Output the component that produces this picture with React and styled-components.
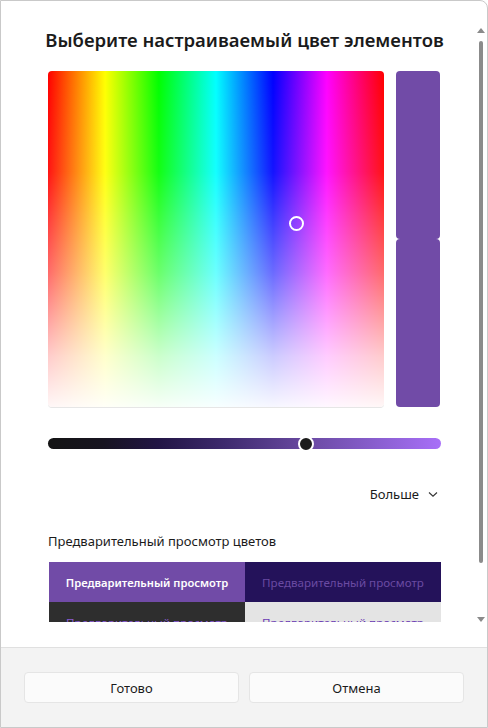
import React from 'react';
import styled, { createGlobalStyle } from 'styled-components';

const GlobalStyle = createGlobalStyle`
  html, body {
    margin: 0;
    padding: 0;
    background: #ffffff;
  }
  * {
    box-sizing: border-box;
  }
`;

const Dialog = styled.div`
  width: 488px;
  height: 728px;
  display: flex;
  flex-direction: column;
  border: 1px solid #c9c9c9;
  border-top-right-radius: 8px;
  overflow: hidden;
  background: #ffffff;
  font-family: "Noto Sans", "Open Sans", sans-serif;
  color: #1b1b1b;
`;

const Body = styled.div`
  flex: 1;
  padding-top: 23px;
`;

const Viewport = styled.div`
  position: relative;
  height: 598px;
  overflow: hidden;
`;

const Content = styled.div`
  padding: 0 46px 0 47px;
  display: flex;
  flex-direction: column;
`;

const Title = styled.h1`
  margin: 3px -12px 0;
  font-size: 18.5px;
  line-height: 26px;
  font-weight: 600;
  text-align: center;
  white-space: nowrap;
`;

const PickerRow = styled.div`
  margin-top: 18px;
  display: flex;
  gap: 12px;
`;

const Spectrum = styled.div`
  position: relative;
  width: 336px;
  height: 336px;
  border-radius: 4px;
  box-shadow: 0 1px 0 #e6e6e6;
  background:
    linear-gradient(to bottom,
      rgba(255, 255, 255, 0) 0%,
      rgba(255, 255, 255, 0.08) 30%,
      rgba(255, 255, 255, 0.42) 60%,
      rgba(255, 255, 255, 0.8) 85%,
      rgba(255, 255, 255, 0.97) 100%),
    linear-gradient(to right,
      #ff0000 0%, #ffff00 17%, #00ff00 33%, #00ffff 50%,
      #0000ff 67%, #ff00ff 83%, #ff0000 100%);
`;

const Thumb = styled.span`
  position: absolute;
  width: 15px;
  height: 15px;
  margin: -7px 0 0 -7px;
  border: 2px solid #ffffff;
  border-radius: 50%;
`;

const Swatches = styled.div`
  width: 44px;
  display: flex;
  flex-direction: column;
`;

const Swatch = styled.div`
  flex: 1;
  background: ${p => p.$color};
  border-radius: 4px;
`;

const Slider = styled.div`
  position: relative;
  margin-top: 31px;
  height: 11px;
  border-radius: 6px;
  background: linear-gradient(to right,
    #141414 0%, #171420 14%, #221545 28%, #3e2a6e 45%,
    #6a4aa2 66%, #8a5fd0 84%, #a86ff8 100%);
`;

const Knob = styled.span`
  position: absolute;
  top: 50%;
  width: 16px;
  height: 16px;
  margin: -8px 0 0 -8px;
  border-radius: 50%;
  background: #1b1b1b;
  border: 2px solid #ffffff;
`;

const MoreRow = styled.div`
  margin-top: 35px;
  display: flex;
  justify-content: flex-end;
  align-items: center;
  gap: 8px;
  padding-right: 2px;
  font-size: 13px;
  line-height: 20px;
`;

const Label = styled.div`
  margin-top: 28px;
  font-size: 13px;
  line-height: 18px;
`;

const PreviewGrid = styled.div`
  margin-top: 12px;
  margin-left: 1px;
  display: grid;
  grid-template-columns: 1fr 1fr;
  grid-auto-rows: 40px;
`;

const PreviewCell = styled.div`
  display: flex;
  align-items: center;
  justify-content: center;
  background: ${p => p.$bg};
  color: ${p => p.$fg};
  font-size: ${p => (p.$bold ? '11.2px' : '11.6px')};
  font-weight: ${p => (p.$bold ? 600 : 400)};
  white-space: nowrap;
`;

const ScrollTrack = styled.div`
  position: absolute;
  top: 4px;
  right: 2px;
  bottom: 0;
  width: 8px;
  display: flex;
  flex-direction: column;
  align-items: center;
  justify-content: space-between;
`;

const Arrow = styled.span`
  width: 0;
  height: 0;
  border-left: 4px solid transparent;
  border-right: 4px solid transparent;
  ${p => (p.$down
    ? 'border-top: 5px solid #8a8a8a;'
    : 'border-bottom: 5px solid #8a8a8a;')}
`;

const ScrollThumb = styled.span`
  position: absolute;
  top: 13px;
  left: 2px;
  width: 4px;
  height: 522px;
  border-radius: 2px;
  background: #8b8b8b;
`;

const Footer = styled.div`
  height: 80px;
  border-top: 1px solid #e0e0e0;
  background: #f3f3f3;
  display: flex;
  gap: 10px;
  padding: 24px 23px 0 23px;
`;

const Button = styled.button`
  flex: 1;
  height: 31px;
  border: 1px solid #e5e5e5;
  border-radius: 4px;
  background: #fbfbfb;
  font-family: "Noto Sans", "Open Sans", sans-serif;
  font-size: 13px;
  color: #1b1b1b;
`;

const Chevron = () => (
  <svg width="12" height="12" viewBox="0 0 12 12">
    <path d="M2 4.5 L6 8.2 L10 4.5" fill="none" stroke="#333" strokeWidth="1.1" />
  </svg>
);

const previews = [
  { bg: '#714ba7', fg: '#ffffff', bold: true },
  { bg: '#24125a', fg: '#6a4aa2' },
  { bg: '#2e2e2e', fg: '#8a5cd2' },
  { bg: '#e4e4e4', fg: '#6b3cb4' },
];

export default function App() {
  return (
    <>
      <GlobalStyle />
      <Dialog>
        <Body>
          <Viewport>
            <Content>
              <Title>Выберите настраиваемый цвет элементов</Title>
              <PickerRow>
                <Spectrum>
                  <Thumb style={{ left: 248, top: 152 }} />
                </Spectrum>
                <Swatches>
                  <Swatch $color="#714ba7" />
                  <Swatch $color="#714ba7" />
                </Swatches>
              </PickerRow>
              <Slider>
                <Knob style={{ left: '65.6%' }} />
              </Slider>
              <MoreRow>
                Больше <Chevron />
              </MoreRow>
              <Label>Предварительный просмотр цветов</Label>
              <PreviewGrid>
                {previews.map((p, i) => (
                  <PreviewCell key={i} $bg={p.bg} $fg={p.fg} $bold={p.bold}>
                    Предварительный просмотр
                  </PreviewCell>
                ))}
              </PreviewGrid>
            </Content>
            <ScrollTrack>
              <Arrow />
              <Arrow $down />
              <ScrollThumb />
            </ScrollTrack>
          </Viewport>
        </Body>
        <Footer>
          <Button>Готово</Button>
          <Button>Отмена</Button>
        </Footer>
      </Dialog>
    </>
  );
}
